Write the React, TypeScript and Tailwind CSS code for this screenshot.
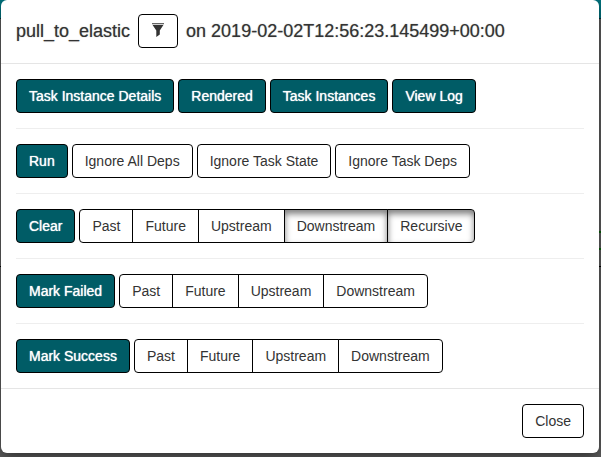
import type { ReactNode } from "react";

const base =
  "h-[34px] border border-black px-3 text-sm leading-5 whitespace-nowrap";

function PrimaryButton({ children }: { children: ReactNode }) {
  return (
    <button
      type="button"
      className={`${base} rounded bg-[#005c66] text-white [text-shadow:0_0_1px_#fff]`}
    >
      {children}
    </button>
  );
}

function PlainButton({ children }: { children: ReactNode }) {
  return (
    <button type="button" className={`${base} rounded bg-white text-[#333]`}>
      {children}
    </button>
  );
}

function ButtonGroup({
  label,
  items,
  active = [],
}: {
  label: string;
  items: string[];
  active?: string[];
}) {
  return (
    <div role="group" aria-label={label} className="flex -space-x-px">
      {items.map((item) => (
        <button
          key={item}
          type="button"
          aria-pressed={active.includes(item)}
          className={`${base} bg-white text-[#333] first:rounded-l last:rounded-r aria-pressed:shadow-[inset_0_4px_6px_rgba(0,0,0,0.5)]`}
        >
          {item}
        </button>
      ))}
    </div>
  );
}

function Row({ children }: { children: ReactNode }) {
  return <div className="flex gap-1 py-[15px]">{children}</div>;
}

function Backdrop() {
  return (
    <div aria-hidden="true" className="absolute inset-0 flex flex-col bg-[#606060]">
      <div className="h-[19px] border-b border-[#00343a] bg-[#00737e]" />
      <div className="mt-[212px] flex h-[19px] justify-end">
        <div className="w-1 border-y-2 border-[#086408]" />
      </div>
      <div className="mt-4 h-px bg-black" />
    </div>
  );
}

export default function App() {
  return (
    <div className="relative min-h-screen overflow-hidden pb-1 font-['Liberation_Sans',Arial,sans-serif] text-[#333]">
      <Backdrop />
      <div
        role="dialog"
        aria-modal="true"
        aria-labelledby="dialog-title"
        className="relative mr-0.5 ml-px rounded-md bg-white shadow-[0_5px_15px_rgba(0,0,0,0.5)]"
      >
        <header className="border-b border-[#e5e5e5] px-[15px] pt-3.5 pb-[15px]">
          <h4
            id="dialog-title"
            className="flex items-center gap-2 text-lg leading-5 whitespace-nowrap [text-shadow:0_0_1px_#3338]"
          >
            <span>pull_to_elastic</span>
            <button
              type="button"
              aria-label="Filter"
              className="flex h-[34px] w-10 items-center justify-center rounded border border-black bg-white"
            >
              <svg viewBox="0 0 16 16" className="size-4" fill="#333">
                <path d="M2 0h12v1.3H2z" fill="#666" />
                <path d="M2.6 2h10.8L9.8 7.6v4L6.3 14V7.6z" />
              </svg>
            </button>
            <span>on 2019-02-02T12:56:23.145499+00:00</span>
          </h4>
        </header>

        <div className="divide-y divide-[#eee] px-[15px]">
          <Row>
            <PrimaryButton>Task Instance Details</PrimaryButton>
            <PrimaryButton>Rendered</PrimaryButton>
            <PrimaryButton>Task Instances</PrimaryButton>
            <PrimaryButton>View Log</PrimaryButton>
          </Row>
          <Row>
            <PrimaryButton>Run</PrimaryButton>
            <PlainButton>Ignore All Deps</PlainButton>
            <PlainButton>Ignore Task State</PlainButton>
            <PlainButton>Ignore Task Deps</PlainButton>
          </Row>
          <Row>
            <PrimaryButton>Clear</PrimaryButton>
            <ButtonGroup
              label="Clear scope"
              items={["Past", "Future", "Upstream", "Downstream", "Recursive"]}
              active={["Downstream", "Recursive"]}
            />
          </Row>
          <Row>
            <PrimaryButton>Mark Failed</PrimaryButton>
            <ButtonGroup
              label="Mark failed scope"
              items={["Past", "Future", "Upstream", "Downstream"]}
            />
          </Row>
          <Row>
            <PrimaryButton>Mark Success</PrimaryButton>
            <ButtonGroup
              label="Mark success scope"
              items={["Past", "Future", "Upstream", "Downstream"]}
            />
          </Row>
        </div>

        <footer className="flex justify-end border-t border-[#e5e5e5] p-[15px]">
          <PlainButton>Close</PlainButton>
        </footer>
      </div>
    </div>
  );
}
